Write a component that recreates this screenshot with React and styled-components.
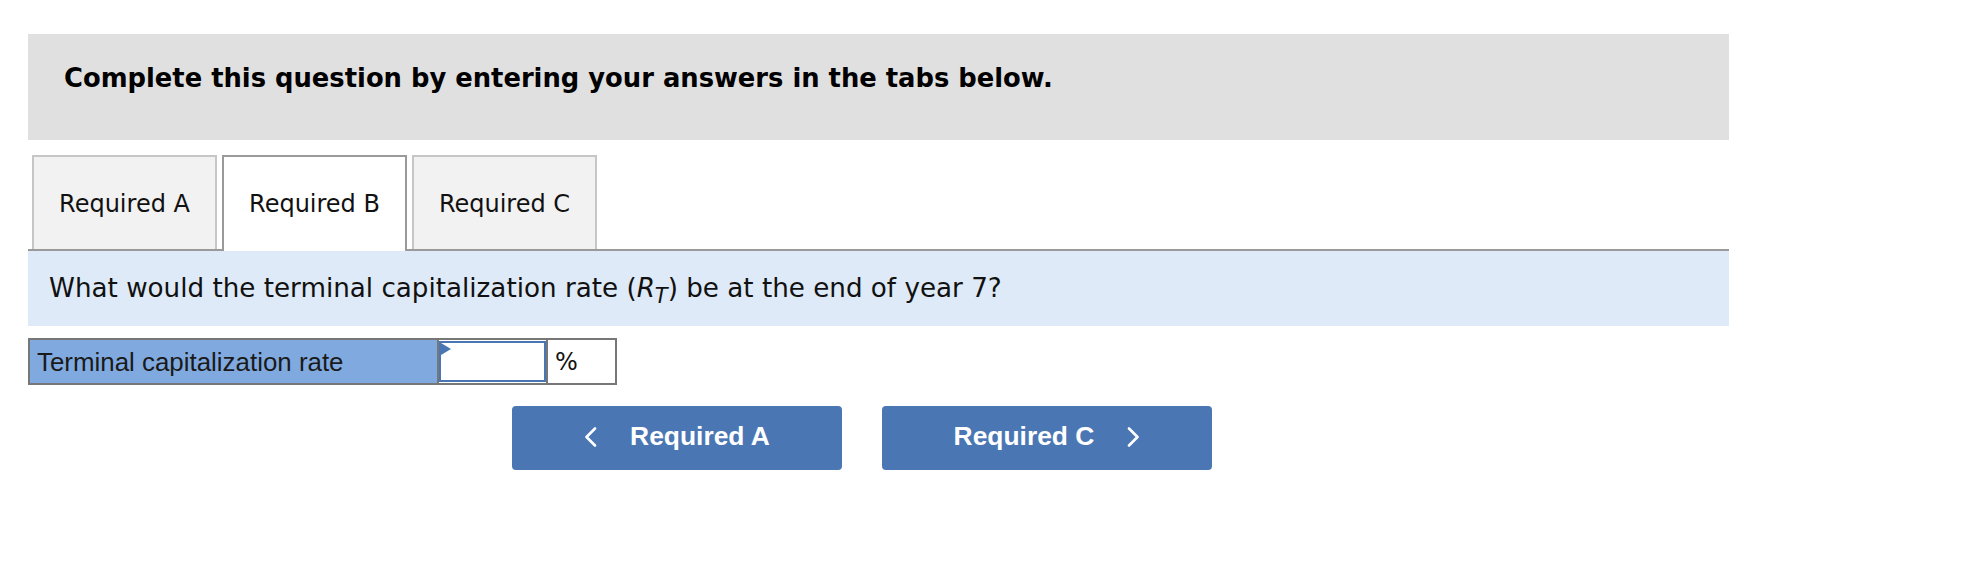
import React from "react";
import styled, { createGlobalStyle } from "styled-components";

const Global = createGlobalStyle`
  html, body { margin: 0; padding: 0; background: #fff; }
  body { font-family: "DejaVu Sans", Verdana, sans-serif; color: #000; }
`;

const Page = styled.div`
  width: 1701px;
  padding: 34px 0 0 28px;
`;

const Instructions = styled.div`
  box-sizing: border-box;
  height: 106px;
  background: #e0e0e0;
  padding: 29px 0 0 36px;
  font-family: "DejaVu Sans", Verdana, sans-serif;
  font-weight: bold;
  font-size: 25.8px;
  line-height: 30px;
`;

const TabBar = styled.div`
  display: flex;
  align-items: flex-end;
  gap: 5px;
  margin-top: 15px;
  padding-left: 4px;
  border-bottom: 2px solid #9a9a9a;
`;

const Tab = styled.div`
  box-sizing: border-box;
  width: 185px;
  height: ${(p) => (p.$active ? "96px" : "94px")};
  margin-bottom: ${(p) => (p.$active ? "-2px" : "0")};
  border: 2px solid ${(p) => (p.$active ? "#9a9a9a" : "#c6c6c6")};
  border-bottom: none;
  background: ${(p) => (p.$active ? "#fff" : "#f2f2f2")};
  display: flex;
  align-items: center;
  justify-content: center;
  padding-top: 2px;
  padding-bottom: ${(p) => (p.$active ? "2px" : "0")};
  font-family: "DejaVu Sans", Verdana, sans-serif;
  font-size: 24px;
  color: #111;
`;

const Question = styled.div`
  box-sizing: border-box;
  height: 75px;
  background: #deeaf7;
  display: flex;
  align-items: center;
  padding: 0 0 2px 21px;
  font-family: "DejaVu Sans", Verdana, sans-serif;
  font-size: 26.2px;
  color: #111;
`;

const Sym = styled.i`
  font-style: italic;
`;

const Sub = styled.sub`
  font-style: italic;
  font-size: 0.8em;
  vertical-align: -0.3em;
  line-height: 0;
`;

const AnswerRow = styled.div`
  display: flex;
  height: 47px;
  margin-top: 12px;
`;

const LabelCell = styled.div`
  box-sizing: border-box;
  width: 411px;
  height: 100%;
  background: #80aadf;
  border: 2px solid #777;
  display: flex;
  align-items: center;
  padding: 2px 0 0 7px;
  font-family: "Liberation Sans", Arial, sans-serif;
  font-size: 25.9px;
  color: #1a1a1a;
`;

const InputCell = styled.div`
  position: relative;
  box-sizing: border-box;
  width: 107px;
  height: 100%;
  border-top: 2px solid #777;
  border-bottom: 2px solid #777;
  padding: 1px 0;
  display: flex;
`;

const Field = styled.input`
  box-sizing: border-box;
  flex: 1;
  width: 100%;
  margin: 0;
  border: 2px solid #4a76b4;
  background: #fff;
  outline: none;
  font-family: "Liberation Sans", Arial, sans-serif;
  font-size: 22px;
`;

const Marker = styled.span`
  position: absolute;
  left: 2px;
  top: 3px;
  width: 0;
  height: 0;
  border-top: 6px solid transparent;
  border-bottom: 6px solid transparent;
  border-left: 10px solid #4a76b4;
`;

const UnitCell = styled.div`
  box-sizing: border-box;
  width: 71px;
  height: 100%;
  border: 2px solid #777;
  display: flex;
  align-items: center;
  padding: 0 0 0 7px;
  font-family: "DejaVu Sans", Verdana, sans-serif;
  font-size: 24px;
  color: #111;
`;

const NavRow = styled.div`
  display: flex;
  gap: 40px;
  margin-top: 21px;
  padding-left: 484px;
`;

const NavButton = styled.button`
  box-sizing: border-box;
  width: 330px;
  height: 64px;
  border: none;
  border-radius: 4px;
  background: #4a76b4;
  color: #fff;
  display: flex;
  align-items: center;
  justify-content: center;
  gap: 33px;
  padding: 0 0 3px 0;
  font-family: "Liberation Sans", Arial, sans-serif;
  font-weight: bold;
  font-size: 26.4px;
  cursor: pointer;
`;

const Chevron = ({ dir }) => (
  <svg width="13" height="20" viewBox="0 0 13 20" aria-hidden="true">
    <polyline
      points={dir === "left" ? "11,1.5 2.5,10 11,18.5" : "2,1.5 10.5,10 2,18.5"}
      fill="none"
      stroke="#fff"
      strokeWidth="2.6"
      strokeLinecap="round"
      strokeLinejoin="round"
    />
  </svg>
);

export default function App() {
  return (
    <>
      <Global />
      <Page>
        <Instructions>
          Complete this question by entering your answers in the tabs below.
        </Instructions>
        <TabBar>
          <Tab>Required A</Tab>
          <Tab $active>Required B</Tab>
          <Tab>Required C</Tab>
        </TabBar>
        <Question>
          <span>
            What would the terminal capitalization rate (<Sym>R</Sym>
            <Sub>T</Sub>) be at the end of year 7?
          </span>
        </Question>
        <AnswerRow>
          <LabelCell>Terminal capitalization rate</LabelCell>
          <InputCell>
            <Field type="text" aria-label="Terminal capitalization rate" />
            <Marker />
          </InputCell>
          <UnitCell>%</UnitCell>
        </AnswerRow>
        <NavRow>
          <NavButton>
            <Chevron dir="left" />
            <span>Required A</span>
          </NavButton>
          <NavButton>
            <span>Required C</span>
            <Chevron dir="right" />
          </NavButton>
        </NavRow>
      </Page>
    </>
  );
}
